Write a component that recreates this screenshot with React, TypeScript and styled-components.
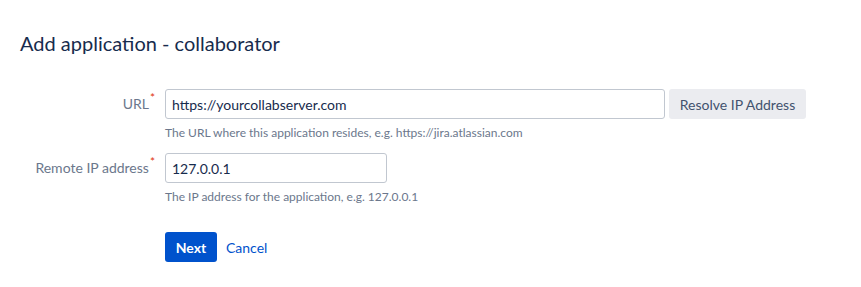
import React from 'react';
import styled, { createGlobalStyle } from 'styled-components';

const GlobalStyle = createGlobalStyle`
  html, body {
    margin: 0;
    padding: 0;
    background: #ffffff;
  }
  body {
    font-family: Lato, "Noto Sans", sans-serif;
    color: #172b4d;
  }
`;

const Page = styled.div`
  padding: 0 20px;
`;

const Title = styled.h2`
  margin: 0;
  padding-top: 31px;
  font-size: 20px;
  font-weight: 400;
  line-height: 24px;
  color: #172b4d;
`;

const Form = styled.form`
  margin-top: 34px;
  display: flex;
  flex-direction: column;
  gap: 12px;
`;

const FieldRow = styled.div`
  display: grid;
  grid-template-columns: 135px 1fr;
  column-gap: 10px;
`;

const Label = styled.label`
  text-align: right;
  font-size: 14px;
  line-height: 30px;
  color: #6b778c;
  white-space: nowrap;
`;

const Required = styled.span`
  color: #de350b;
  font-size: 12px;
  vertical-align: top;
  position: relative;
  top: -6px;
  margin-left: 1px;
`;

const Control = styled.div`
  display: flex;
  flex-direction: column;
`;

const InputLine = styled.div`
  display: flex;
  align-items: center;
  gap: 4px;
`;

const TextInput = styled.input<{ $width: number }>`
  box-sizing: border-box;
  width: ${p => p.$width}px;
  height: 30px;
  padding: 0 6px;
  border: 1px solid #c1c7d0;
  border-radius: 3px;
  font-family: inherit;
  font-size: 14px;
  color: #172b4d;
  background: #fff;
  outline: none;
`;

const SecondaryButton = styled.button`
  box-sizing: border-box;
  height: 30px;
  width: 137px;
  border: none;
  border-radius: 3px;
  background: #ebecf0;
  color: #42526e;
  font-family: inherit;
  font-size: 14px;
  padding: 0 10px;
`;

const Help = styled.div`
  margin-top: 6px;
  font-size: 12px;
  line-height: 16px;
  color: #6b778c;
`;

const Buttons = styled.div`
  margin-top: 27px;
  padding-left: 145px;
  display: flex;
  align-items: center;
  gap: 9px;
`;

const PrimaryButton = styled.button`
  box-sizing: border-box;
  height: 30px;
  width: 52px;
  padding: 0;
  border: none;
  border-radius: 3px;
  background: #0052cc;
  color: #fff;
  font-family: inherit;
  font-weight: 700;
  font-size: 14px;
`;

const LinkButton = styled.a`
  font-size: 14px;
  color: #0052cc;
  text-decoration: none;
`;

export default function App() {
  return (
    <>
      <GlobalStyle />
      <Page>
        <Title>Add application - collaborator</Title>
        <Form onSubmit={e => e.preventDefault()}>
          <FieldRow>
            <Label>
              URL<Required>*</Required>
            </Label>
            <Control>
              <InputLine>
                <TextInput $width={500} defaultValue="https://yourcollabserver.com" />
                <SecondaryButton type="button">Resolve IP Address</SecondaryButton>
              </InputLine>
              <Help>The URL where this application resides, e.g. https://jira.atlassian.com</Help>
            </Control>
          </FieldRow>
          <FieldRow>
            <Label>
              Remote IP address<Required>*</Required>
            </Label>
            <Control>
              <InputLine>
                <TextInput $width={222} defaultValue="127.0.0.1" />
              </InputLine>
              <Help>The IP address for the application, e.g. 127.0.0.1</Help>
            </Control>
          </FieldRow>
        </Form>
        <Buttons>
          <PrimaryButton type="submit">Next</PrimaryButton>
          <LinkButton href="#">Cancel</LinkButton>
        </Buttons>
      </Page>
    </>
  );
}
